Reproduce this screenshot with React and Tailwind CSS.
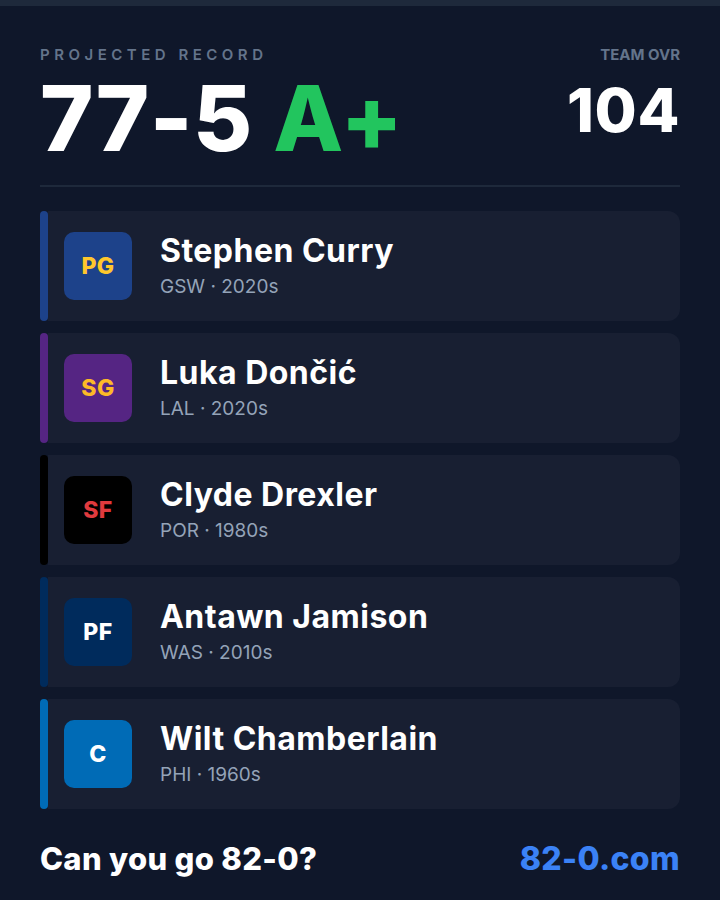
import React from "react";

const players = [
  { pos: "PG", name: "Stephen Curry", sub: "GSW · 2020s", bg: "bg-[#1d428a]", fg: "text-[#ffc72c]", bar: "bg-[#1d428a]" },
  { pos: "SG", name: "Luka Dončić", sub: "LAL · 2020s", bg: "bg-[#552583]", fg: "text-[#fdb927]", bar: "bg-[#552583]" },
  { pos: "SF", name: "Clyde Drexler", sub: "POR · 1980s", bg: "bg-[#000000]", fg: "text-[#e03a3e]", bar: "bg-[#000000]" },
  { pos: "PF", name: "Antawn Jamison", sub: "WAS · 2010s", bg: "bg-[#002b5c]", fg: "text-white", bar: "bg-[#002b5c]" },
  { pos: "C", name: "Wilt Chamberlain", sub: "PHI · 1960s", bg: "bg-[#006bb6]", fg: "text-white", bar: "bg-[#006bb6]" },
];

export default function App() {
  return (
    <div className="w-[720px] h-[900px] bg-[#0f172a] font-['Inter',sans-serif] flex flex-col overflow-hidden">
      <div className="h-[6px] bg-[#1e293b]" />
      <div className="px-10 pt-[39px] flex flex-col">
        <div className="flex justify-between">
          <div className="flex flex-col">
            <div className="text-[15px] leading-5 font-semibold tracking-[0.3em] text-[#64748b]">PROJECTED RECORD</div>
            <div className="mt-[8px] text-[91px] leading-none font-extrabold tracking-[0.005em] text-white">
              77-5 <span className="text-[#22c55e]">A+</span>
            </div>
          </div>
          <div className="flex flex-col items-end">
            <div className="text-[15px] leading-5 font-bold text-[#64748b]">TEAM OVR</div>
            <div className="mt-[15px] text-[61px] leading-none font-extrabold tracking-[0.01em] text-white">104</div>
          </div>
        </div>
        <div className="mt-[21px] h-[2px] bg-[#1e293b]" />
        <div className="mt-[24px] flex flex-col gap-3">
          {players.map((p) => (
            <div key={p.pos} className="flex h-[110px]">
              <div className={`w-2 rounded-full ${p.bar}`} />
              <div className="flex-1 flex items-center bg-[#181f32] rounded-r-xl pl-4">
                <div className={`w-[68px] h-[68px] rounded-[10px] flex items-center justify-center ${p.bg}`}>
                  <span className={`text-[23px] font-extrabold tracking-[0.02em] ${p.fg}`}>{p.pos}</span>
                </div>
                <div className="ml-7 flex flex-col">
                  <div className="text-[32px] leading-9 font-bold text-white tracking-[0.015em]">{p.name}</div>
                  <div className="mt-[6px] text-[19px] leading-6 text-[#94a3b8]">{p.sub}</div>
                </div>
              </div>
            </div>
          ))}
        </div>
        <div className="mt-[32px] flex justify-between items-center">
          <div className="text-[31px] leading-9 font-extrabold text-white tracking-[0.01em]">Can you go 82-0?</div>
          <div className="text-[32px] leading-9 font-extrabold text-[#3b82f6] tracking-[0.01em]">82-0.com</div>
        </div>
      </div>
    </div>
  );
}
